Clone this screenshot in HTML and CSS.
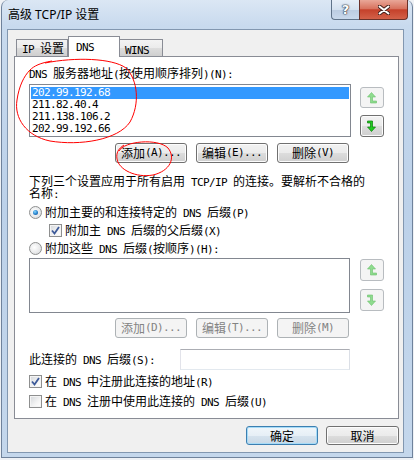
FILE: index.html
```html
<!DOCTYPE html>
<html>
<head>
<meta charset="utf-8">
<link rel="stylesheet" href="styles.css">
</head>
<body>
<div class="window">
  <div class="titlebar">
    <div class="title">高级 TCP/IP 设置</div>
    <div class="capbtns">
      <div class="cbtn help">?</div>
      <div class="cbtn close">
        <svg width="12" height="10" viewBox="0 0 12 10"><path d="M1.5 1.5 L10.5 8.5 M10.5 1.5 L1.5 8.5" stroke="#47231d" stroke-width="4" stroke-linecap="round"/><path d="M1.5 1.5 L10.5 8.5 M10.5 1.5 L1.5 8.5" stroke="#fff" stroke-width="2" stroke-linecap="round"/></svg>
      </div>
    </div>
  </div>
  <div class="client">
    <div class="tabs">
      <div class="tab"><span class="m">IP </span>设置</div>
      <div class="tab sel"><span class="m">DNS</span></div>
      <div class="tab last"><span class="m">WINS</span></div>
    </div>
    <div class="panel">
      <div class="lbl"><span class="m">DNS </span>服务器地址<span class="m">(</span>按使用顺序排列<span class="m">)(N):</span></div>
      <div class="listrow">
        <div class="list l1">
          <div class="item selitem">202.99.192.68</div>
          <div class="item">211.82.40.4</div>
          <div class="item">211.138.106.2</div>
          <div class="item">202.99.192.66</div>
        </div>
        <div class="arrows a1">
          <div class="abtn dis"><svg width="10" height="12" viewBox="0 0 10 12"><path d="M4.5 0.5 L8.5 5 L5.5 5 L5.5 9 L9.5 9 L9.5 11 L3.5 11 L3.5 5 L0.5 5 Z" fill="#8fdc8f" stroke="#6cc06c" stroke-width="0.6"/></svg></div>
          <div class="abtn down"><svg width="10" height="12" viewBox="0 0 10 12"><path d="M0.5 1 L5.5 1 L5.5 7 L8.5 7 L4.5 11.5 L0.5 7 L3.5 7 L3.5 3 L0.5 3 Z" fill="#22cc22" stroke="#0b7d0b" stroke-width="0.7"/></svg></div>
        </div>
      </div>
      <div class="btnrow r1">
        <div class="btn">添加<span class="m">(A)...</span></div>
        <div class="btn">编辑<span class="m">(E)...</span></div>
        <div class="btn">删除<span class="m">(V)</span></div>
      </div>
      <div class="para">
        <div class="pl">下列三个设置应用于所有启用<span class="m"> TCP/IP </span>的连接。要解析不合格的</div>
        <div class="pl">名称<span class="m">:</span></div>
      </div>
      <div class="opt o1"><span class="rb on"></span><span class="otxt">附加主要的和连接特定的<span class="m"> DNS </span>后缀<span class="m">(P)</span></span></div>
      <div class="opt o2"><span class="cb on"><svg width="9" height="9" viewBox="0 0 9 9"><path d="M1 4.5 L3.5 7.5 L8 1" fill="none" stroke="#3d5a99" stroke-width="1.8"/></svg></span><span class="otxt">附加主<span class="m"> DNS </span>后缀的父后缀<span class="m">(X)</span></span></div>
      <div class="opt o3"><span class="rb"></span><span class="otxt">附加这些<span class="m"> DNS </span>后缀<span class="m">(</span>按顺序<span class="m">)(H):</span></span></div>
      <div class="listrow r2">
        <div class="list l2"></div>
        <div class="arrows a2">
          <div class="abtn dis"><svg width="10" height="12" viewBox="0 0 10 12"><path d="M4.5 0.5 L8.5 5 L5.5 5 L5.5 9 L9.5 9 L9.5 11 L3.5 11 L3.5 5 L0.5 5 Z" fill="#8fdc8f" stroke="#6cc06c" stroke-width="0.6"/></svg></div>
          <div class="abtn dis"><svg width="10" height="12" viewBox="0 0 10 12"><path d="M0.5 1 L5.5 1 L5.5 7 L8.5 7 L4.5 11.5 L0.5 7 L3.5 7 L3.5 3 L0.5 3 Z" fill="#8fdc8f" stroke="#6cc06c" stroke-width="0.6"/></svg></div>
        </div>
      </div>
      <div class="btnrow r2b">
        <div class="btn dis">添加<span class="m">(D)...</span></div>
        <div class="btn dis">编辑<span class="m">(T)...</span></div>
        <div class="btn dis">删除<span class="m">(M)</span></div>
      </div>
      <div class="suffix">
        <div class="slbl">此连接的<span class="m"> DNS </span>后缀<span class="m">(S):</span></div>
        <div class="input"></div>
      </div>
      <div class="opt o4"><span class="cb on"><svg width="9" height="9" viewBox="0 0 9 9"><path d="M1 4.5 L3.5 7.5 L8 1" fill="none" stroke="#3d5a99" stroke-width="1.8"/></svg></span><span class="otxt">在<span class="m"> DNS </span>中注册此连接的地址<span class="m">(R)</span></span></div>
      <div class="opt o5"><span class="cb"></span><span class="otxt">在<span class="m"> DNS </span>注册中使用此连接的<span class="m"> DNS </span>后缀<span class="m">(U)</span></span></div>
    </div>
    <div class="footer">
      <div class="btn fbtn default">确定</div>
      <div class="btn fbtn cancel">取消</div>
    </div>
  </div>
</div>
<svg class="marks" width="414" height="460" viewBox="0 0 414 460">
  <path d="M45 63 C 75 57, 112 58, 126 68 C 138 80, 140 104, 130 122 C 118 140, 80 146, 50 141 C 26 136, 14 118, 17 100 C 19 86, 24 76, 30 70 C 34 66, 40 63, 52 61" fill="none" stroke="#ff0000" stroke-width="1"/>
  <path d="M119 151 C 124 141, 158 138, 168 148 C 176 158, 170 171, 153 175 C 136 178, 119 170, 117 159 C 116 153, 118 149, 124 145" fill="none" stroke="#ff0000" stroke-width="1"/>
</svg>
</body>
</html>
```
FILE: styles.css
```css
* { box-sizing: border-box; margin: 0; padding: 0; }
html, body { width: 414px; height: 460px; overflow: hidden; }
body {
  position: relative;
  background: #eef1f5;
  font-family: "Noto Sans CJK SC", "Noto Sans", sans-serif;
  font-size: 12px;
  line-height: 12px;
  color: #000;
}
.m {
  font-family: "DejaVu Sans Mono", "Liberation Mono", monospace;
  font-size: 11px;
  letter-spacing: -0.62px;
}

.window {
  margin-left: 1px;
  width: 412px;
  height: 458px;
  border: 1px solid #6f829b;
  border-top: none;
  border-radius: 7px 7px 0 0;
  background: linear-gradient(180deg, #dbe7f4 0, #c8daee 26px, #bcd1e9 45%, #c4d7ec 100%);
  padding: 0 8px 4px 5px;
  display: flex;
  flex-direction: column;
}
.titlebar {
  margin: 0 -8px 0 -5px;
  height: 29px;
  display: flex;
  align-items: flex-start;
  padding: 0 4px 0 6px;
}
.title {
  padding-top: 9px;
  font-family: "Noto Sans", "Noto Sans CJK SC", sans-serif;
  font-size: 12px;
  line-height: 12px;
  color: #000;
}
.capbtns { margin-left: auto; display: flex; }
.cbtn {
  height: 20px;
  display: flex;
  align-items: center;
  justify-content: center;
  border: 1px solid #5f7389;
  border-top: none;
}
.help {
  width: 28px;
  border-radius: 0 0 0 4px;
  border-right: none;
  background: linear-gradient(180deg, #e6eef7 0, #d4e1ef 50%, #bccde2 55%, #c9d9ec 100%);
  font-family: "DejaVu Sans", sans-serif;
  font-weight: bold;
  font-size: 13px;
  color: #fff;
  text-shadow: 0 0 1px #2b3440, 0 0 1px #2b3440, 0 0 2px #2b3440;
}
.close {
  width: 49px;
  border-radius: 0 0 4px 0;
  border-color: #6a3129;
  background: linear-gradient(180deg, #e9a798 0, #d8735f 45%, #c5412b 52%, #d36149 100%);
}

.client {
  height: 424px;
  border: 1px solid #8297b0;
  background: #f0f0f0;
  padding-top: 6px;
  display: flex;
  flex-direction: column;
}
.tabs {
  margin-left: 6px;
  padding-left: 2px;
  height: 20px;
  display: flex;
  align-items: flex-end;
}
.tab {
  height: 17px;
  border: 1px solid #898c95;
  border-bottom: none;
  background: linear-gradient(180deg, #f3f3f3 0, #ebebeb 50%, #dddddd 50%, #cfcfcf 100%);
  padding: 2px 0 0 5px;
  line-height: 12px;
  width: 52px;
}
.tab.sel {
  position: relative;
  z-index: 1;
  height: 21px;
  margin-bottom: -1px;
  width: 52px;
  background: #fff;
  padding: 3px 0 0 7px;
}
.tab.last { width: 43px; border-left: none; padding-top: 3px; }

.panel {
  margin-left: 6px;
  width: 385px;
  height: 363px;
  border: 1px solid #898c95;
  background: #fff;
  padding-left: 14px;
  display: flex;
  flex-direction: column;
}
.lbl { margin-top: 10px; height: 12px; white-space: nowrap; }
.listrow { display: flex; margin-top: 5px; }
.list {
  border: 1px solid #828790;
  background: #fff;
  padding: 2px 1px 0 1px;
}
.l1 { width: 322px; height: 53px; }
.l2 { width: 321px; height: 55px; }
.item {
  height: 12px;
  line-height: 12px;
  padding-left: 1px;
  font-family: "DejaVu Sans Mono", monospace;
  font-size: 11px;
  letter-spacing: -0.62px;
}
.selitem { background: #3399ff; color: #fff; }
.arrows { display: flex; flex-direction: column; }
.a1 { margin-left: 9px; padding-top: 3px; gap: 7px; }
.a2 { margin-left: 10px; padding-top: 1px; gap: 8px; }
.abtn {
  width: 24px;
  height: 21px;
  border: 1px solid #707070;
  border-radius: 3px;
  background: linear-gradient(180deg, #f2f2f2 0, #ebebeb 50%, #dddddd 50%, #cfcfcf 100%);
  box-shadow: inset 0 0 0 1px #fbfbfb;
  display: flex;
  align-items: center;
  justify-content: center;
}
.a1 .down { height: 22px; }
.a2 .abtn { height: 22px; }
.abtn.dis { border-color: #b8bcc0; background: #f4f4f4; box-shadow: none; }

.btnrow {
  width: 320px;
  height: 20px;
  display: flex;
  justify-content: flex-end;
  gap: 9px;
}
.r1 { margin-top: 6px; }
.r2b { margin-top: 5px; }
.btn {
  width: 72px;
  height: 20px;
  border: 1px solid #707070;
  border-radius: 3px;
  background: linear-gradient(180deg, #f2f2f2 0, #ebebeb 50%, #dddddd 50%, #cfcfcf 100%);
  box-shadow: inset 0 0 0 1px #fcfcfc;
  display: flex;
  align-items: center;
  justify-content: center;
  white-space: nowrap;
  line-height: 12px;
}
.btn.dis { border-color: #adb2b5; background: #f4f4f4; color: #838383; box-shadow: none; }

.para { margin-top: 12px; white-space: nowrap; }
.pl { height: 12px; line-height: 12px; }
.opt { height: 13px; display: flex; align-items: center; white-space: nowrap; }
.otxt { margin-left: 3px; line-height: 12px; }
.o1 { margin-top: 7px; }
.o2 { margin-top: 5px; padding-left: 20px; }
.o3 { margin-top: 5px; }
.r2 { margin-top: 3px; }
.o4 { margin-top: 5px; }
.o5 { margin-top: 7px; }

.rb {
  position: relative;
  width: 13px;
  height: 13px;
  border-radius: 50%;
  border: 1px solid #8e8f8f;
  background: radial-gradient(circle at 40% 40%, #ffffff 0, #e9eaeb 55%, #cfd2d6 100%);
  flex: none;
}
.rb.on::after {
  content: "";
  position: absolute;
  left: 3px;
  top: 3px;
  width: 5px;
  height: 5px;
  border-radius: 50%;
  background: radial-gradient(circle at 40% 35%, #8ad8ff 0, #2a87d0 50%, #12488f 100%);
}
.cb {
  width: 13px;
  height: 13px;
  border: 1px solid #8e8f8f;
  background: linear-gradient(135deg, #d3d6da 0, #f4f4f4 60%, #ffffff 100%);
  box-shadow: inset 0 0 0 1px #f4f4f4;
  display: flex;
  align-items: center;
  justify-content: center;
  flex: none;
}
.suffix { margin-top: 11px; height: 21px; display: flex; align-items: center; }
.slbl { width: 151px; white-space: nowrap; line-height: 12px; }
.input {
  width: 170px;
  height: 21px;
  border: 1px solid;
  border-color: #abadb3 #dbdfe6 #e3e9ef #e2e3ea;
  background: #fff;
}

.footer {
  margin-top: 7px;
  display: flex;
  justify-content: flex-end;
  gap: 8px;
  padding-right: 4px;
}
.fbtn { height: 19px; }
.fbtn.default {
  border-color: #3c7fb1;
  box-shadow: inset 0 0 0 1px #a6dbf7;
  background: linear-gradient(180deg, #f0f6fa 0, #e6eff6 50%, #d6e3ee 50%, #c9d9e6 100%);
}
.fbtn.cancel { width: 73px; }

.marks { position: absolute; left: 0; top: 0; pointer-events: none; }
```
